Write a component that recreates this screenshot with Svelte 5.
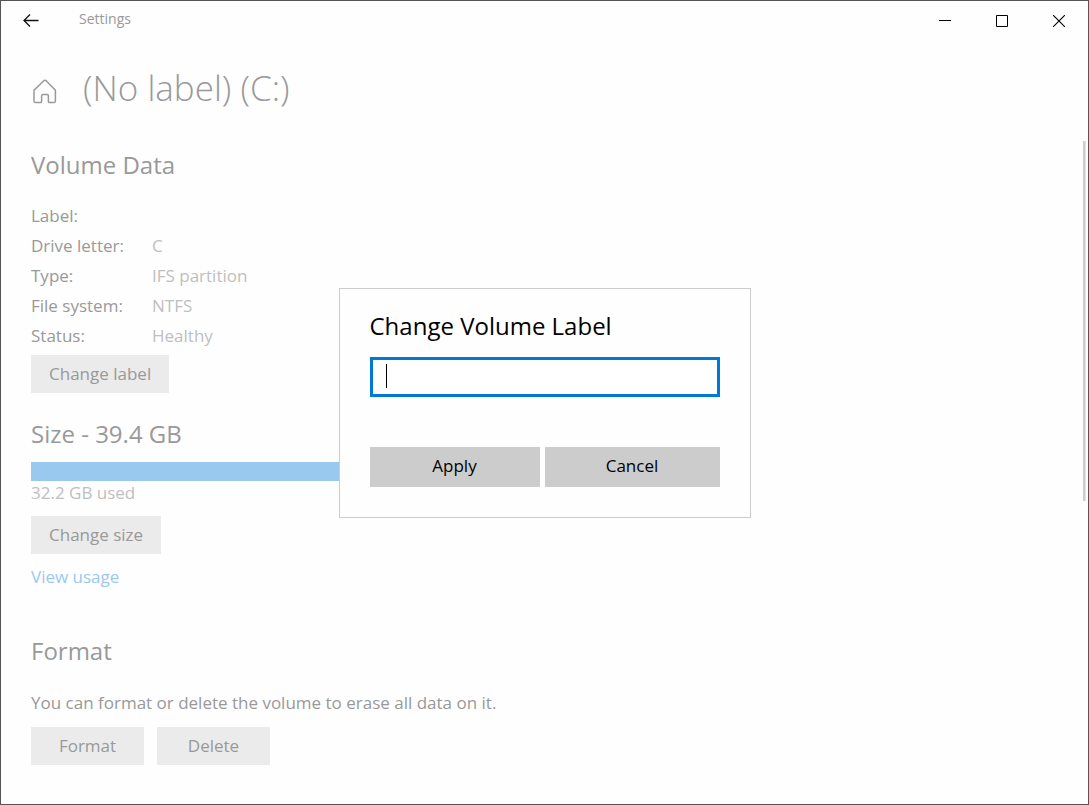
<script>
  const details = [
    { name: "Label:", value: "" },
    { name: "Drive letter:", value: "C" },
    { name: "Type:", value: "IFS partition" },
    { name: "File system:", value: "NTFS" },
    { name: "Status:", value: "Healthy" },
  ];
  const size = 39.4;
  const used = 32.2;

  let volumeLabel = $state("");
</script>

<div class="window">
  <header class="titlebar">
    <button class="back" type="button" aria-label="Back">
      <svg width="16" height="14" viewBox="0 0 16 14" fill="none" stroke="#111" stroke-width="1.3">
        <path d="M15.5 6.5H1M7 .5l-6 6 6 6" />
      </svg>
    </button>
    <span class="app-name">Settings</span>
    <div class="window-buttons">
      <button type="button" aria-label="Minimize">
        <svg width="12" height="12" viewBox="0 0 12 12" shape-rendering="crispEdges">
          <path d="M0 5h12v1H0z" />
        </svg>
      </button>
      <button type="button" aria-label="Maximize">
        <svg width="12" height="12" viewBox="0 0 12 12" fill="none" stroke="#000">
          <path d="M.5.5h11v11H.5z" />
        </svg>
      </button>
      <button type="button" aria-label="Close">
        <svg width="12" height="12" viewBox="0 0 12 12" fill="none" stroke="#000" stroke-width="1.1">
          <path d="m0 0 12 12M12 0 0 12" />
        </svg>
      </button>
    </div>
  </header>

  <div class="page-head">
    <svg
      class="home"
      width="24"
      height="25"
      viewBox="0 0 24 25"
      fill="none"
      stroke="#999"
      stroke-width="1.5"
      stroke-linejoin="round"
      aria-hidden="true"
    >
      <path
        d="M1 11.2 10.8 1.7q1.2-1 2.4 0L22.4 11.2V22q0 1.6-1.6 1.6h-4.2q-1.2 0-1.2-1.2v-5.6q0-1.4-1.4-1.4h-4q-1.4 0-1.4 1.4v5.6q0 1.2-1.2 1.2H2.6Q1 23.6 1 22z"
      />
    </svg>
    <h1>(No label) (C:)</h1>
  </div>

  <div class="body">
    <main>
      <section>
        <h2>Volume Data</h2>
        <dl>
          {#each details as detail (detail.name)}
            <div class="detail">
              <dt>{detail.name}</dt>
              <dd>{detail.value}</dd>
            </div>
          {/each}
        </dl>
        <button class="btn" type="button">Change label</button>
      </section>

      <section>
        <h2 class="size-title">Size - {size} GB</h2>
        <div class="usage">
          <div class="usage-fill" style="width: {(used / size) * 100}%"></div>
        </div>
        <p class="used">{used} GB used</p>
        <button class="btn" type="button">Change size</button>
        <a href="#usage">View usage</a>
      </section>

      <section>
        <h2 class="format-title">Format</h2>
        <p class="hint">You can format or delete the volume to erase all data on it.</p>
        <div class="actions">
          <button class="btn" type="button">Format</button>
          <button class="btn" type="button">Delete</button>
        </div>
      </section>
    </main>
    <div class="scrollbar"></div>
  </div>

  <div class="overlay">
    <form class="dialog" role="dialog" aria-modal="true" onsubmit={(e) => e.preventDefault()}>
      <label for="volume-label">Change Volume Label</label>
      <div class="field">
        <input id="volume-label" type="text" autocomplete="off" bind:value={volumeLabel} />
        {#if !volumeLabel}
          <span class="caret"></span>
        {/if}
      </div>
      <div class="dialog-actions">
        <button type="submit">Apply</button>
        <button type="button">Cancel</button>
      </div>
    </form>
  </div>
</div>

<style>
  :global(body) {
    margin: 0;
    background: #fff;
  }

  .window {
    position: relative;
    box-sizing: border-box;
    min-height: 100vh;
    border: 1px solid #555;
    background: #fefefe;
    color: #999;
    font-family: "Open Sans", "Noto Sans", sans-serif;
    font-size: 17px;
    line-height: 24px;
  }

  button,
  input {
    margin: 0;
    padding: 0;
    border: 0;
    border-radius: 0;
    font: inherit;
  }

  h1,
  h2,
  p,
  dl,
  dd {
    margin: 0;
    font-weight: 400;
  }

  .titlebar {
    display: flex;
    align-items: center;
    height: 40px;
    padding-right: 1px;
  }

  .titlebar button {
    display: grid;
    place-items: center;
    height: 40px;
    background: none;
  }

  .back {
    width: 60px;
  }

  .app-name {
    flex: 1;
    padding: 0 0 4px 18px;
    font-size: 14px;
  }

  .window-buttons {
    display: flex;
  }

  .window-buttons button {
    width: 57px;
  }

  .page-head {
    display: flex;
    align-items: center;
    gap: 26px;
    padding: 23px 32px 0;
  }

  .home {
    margin-top: 6px;
  }

  h1 {
    font-size: 35px;
    font-weight: 300;
    line-height: 48px;
  }

  .body {
    display: flex;
    justify-content: space-between;
    padding: 29px 2px 36px 30px;
  }

  main {
    padding-top: 8px;
  }

  .scrollbar {
    box-sizing: border-box;
    width: 3px;
    height: 360px;
    border-right: 1px solid #e4e4e4;
    background: #ccc;
  }

  h2 {
    font-size: 24px;
    line-height: 32px;
  }

  dl {
    padding: 20px 0 4px;
  }

  .detail {
    display: flex;
    line-height: 30px;
  }

  dt {
    width: 121px;
  }

  dd,
  .used {
    color: #bfbfbf;
  }

  .btn {
    display: block;
    height: 38px;
    padding: 0 18px;
    background: #ebebeb;
    color: #999;
  }

  .size-title {
    margin-top: 25px;
  }

  .usage {
    width: 400px;
    margin-top: 12px;
    background: #ebebeb;
  }

  .usage-fill {
    height: 19px;
    background: #99c9ef;
  }

  .used {
    padding-bottom: 11px;
  }

  a {
    display: inline-block;
    margin-top: 11px;
    color: #99c9ef;
    text-decoration: none;
  }

  .format-title {
    margin-top: 46px;
  }

  .hint {
    padding: 24px 0 12px;
  }

  .actions {
    display: flex;
    gap: 13px;
  }

  .actions .btn {
    min-width: 113px;
  }

  .overlay {
    position: absolute;
    inset: 0;
    display: grid;
    place-items: center;
  }

  .dialog {
    box-sizing: border-box;
    width: 412px;
    padding: 20px 30px 30px;
    border: 1px solid #ccc;
    background: #fefefe;
    color: #000;
  }

  .dialog label {
    display: block;
    font-size: 24px;
    line-height: 34px;
  }

  .field {
    position: relative;
    margin: 14px 0 50px;
  }

  .field input {
    display: block;
    box-sizing: border-box;
    width: 100%;
    height: 40px;
    padding: 0 13px;
    border: 3px solid #0078d7;
    outline: 0;
    background: #fff;
  }

  .caret {
    position: absolute;
    top: 7px;
    left: 16px;
    width: 1px;
    height: 24px;
    background: #000;
    pointer-events: none;
  }

  .dialog-actions {
    display: grid;
    grid-template-columns: 170px 1fr;
    gap: 5px;
  }

  .dialog-actions button {
    height: 40px;
    padding-bottom: 2px;
    background: #ccc;
    color: #000;
  }
</style>
